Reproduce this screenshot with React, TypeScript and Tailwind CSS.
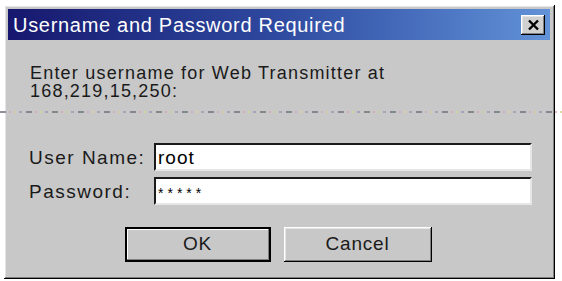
import React from "react";

const raised =
  "shadow-[inset_-1px_-1px_0_#000,inset_1px_1px_0_#fff,inset_-2px_-2px_0_#808080,inset_2px_2px_0_#e4e4e4]";

function CloseButton() {
  return (
    <div className={`mr-[5px] flex h-[20px] w-[24px] items-center justify-center bg-[#d0d0d0] ${raised}`}>
      <svg width="13" height="12" viewBox="0 0 13 12">
        <path d="M2 1.5 L11 10.5 M11 1.5 L2 10.5" stroke="#000" strokeWidth="2.4" />
      </svg>
    </div>
  );
}

function Field({ label, value, secret }: { label: string; value: string; secret?: boolean }) {
  return (
    <div className="flex items-center">
      <div className="-ml-px w-[125px] text-[19px] leading-none tracking-[1.5px] text-[#1a1a1a]">{label}</div>
      <div className="flex h-[28px] flex-1 items-center border-2 border-t-[#1a1a1a] border-l-[#1a1a1a] border-b-[#e6e6e6] border-r-[#e6e6e6] bg-white pl-[2px]">
        {secret ? (
          <span className="pt-[3px] text-[14px] leading-none tracking-[4px] text-black">{value}</span>
        ) : (
          <span className="text-[19px] leading-none tracking-[1px] text-black">{value}</span>
        )}
      </div>
    </div>
  );
}

export default function App() {
  return (
    <div className="relative h-[281px] w-[562px] overflow-hidden bg-white font-['Liberation_Sans',Arial,sans-serif]">
      <div
        className={`ml-[4px] mt-[5px] flex h-[274px] w-[551px] flex-col bg-[#c8c8c8] pb-[4px] pl-[4px] pr-[5px] pt-[4px] ${raised}`}
      >
        <div className="flex h-[31px] items-center bg-gradient-to-r from-[#17176e] via-[#2f4aa0] to-[#6292d8]">
          <div className="ml-[5px] flex-1 text-[20px] leading-none tracking-[0.7px] text-white">
            Username and Password Required
          </div>
          <CloseButton />
        </div>

        <div className="flex flex-1 flex-col pl-[22px] pr-[18px]">
          <div className="mt-[24px] text-[18px] leading-[18px] tracking-[1.2px] text-[#1a1a1a]">
            <div>Enter username for Web Transmitter at</div>
            <div>168,219,15,250:</div>
          </div>

          <div className="mt-[43px] flex flex-col gap-[6px]">
            <Field label="User Name:" value="root" />
            <Field label="Password:" value="*****" secret />
          </div>

          <div className="mt-[22px] flex justify-center gap-[13px] pr-[6px]">
            <button className="flex h-[35px] w-[146px] items-center justify-center border-2 border-black bg-[#c8c8c8] text-[19px] tracking-[0.8px] text-[#1a1a1a] shadow-[inset_-1px_-1px_0_#808080,inset_1px_1px_0_#fff]">
              OK
            </button>
            <button className={`flex h-[35px] w-[148px] items-center justify-center bg-[#c8c8c8] text-[19px] tracking-[0.8px] text-[#1a1a1a] ${raised}`}>
              Cancel
            </button>
          </div>
        </div>
      </div>

      <div className="absolute left-0 top-[111px] h-[2px] w-full bg-[repeating-linear-gradient(90deg,#75757f_0_6px,transparent_6px_9px,#d8a4bc_9px_11px,transparent_11px_14px,#d6cf92_14px_16px,transparent_16px_19px,#9c9cb2_19px_22px,transparent_22px_26px)] opacity-80" />
    </div>
  );
}
